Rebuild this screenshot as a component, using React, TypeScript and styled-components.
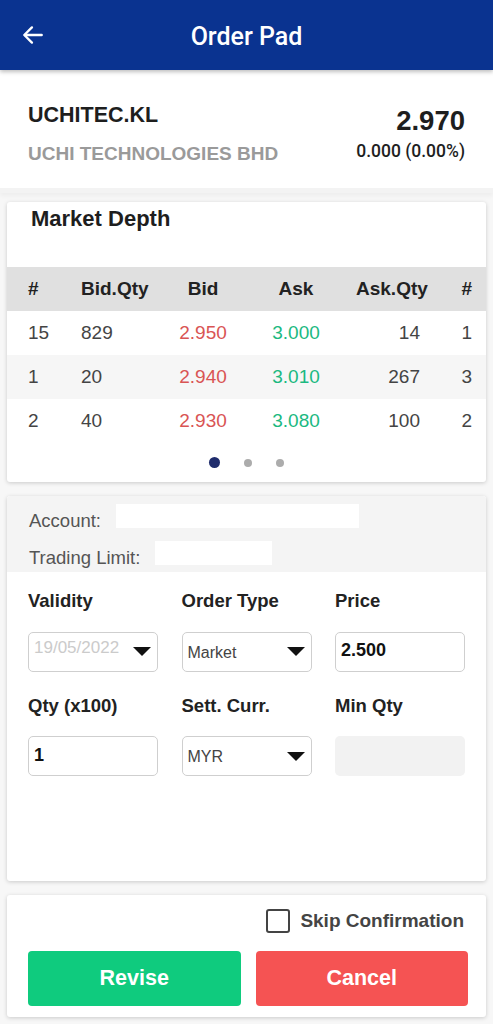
import React from "react";
import styled, { createGlobalStyle } from "styled-components";

const GlobalStyle = createGlobalStyle`
  html, body { margin: 0; padding: 0; }
  body {
    background: #f7f7f7;
    font-family: "Liberation Sans", Arial, sans-serif;
    color: #222;
  }
  * { box-sizing: border-box; }
`;

const Page = styled.div`
  width: 493px;
  min-height: 1024px;
  display: flex;
  flex-direction: column;
`;

const Header = styled.header`
  height: 70px;
  background: #0a3390;
  display: grid;
  grid-template-columns: 70px 1fr 70px;
  align-items: center;
  box-shadow: 0 2px 4px rgba(0, 0, 0, 0.25);
  position: relative;
  z-index: 2;
`;

const BackButton = styled.button`
  border: 0;
  background: transparent;
  padding: 0 0 0 20px;
  height: 70px;
  display: flex;
  align-items: center;
  color: #fff;
`;

const Title = styled.h1`
  margin: 0;
  text-align: center;
  color: #fff;
  font-family: Roboto, "Liberation Sans", sans-serif;
  font-weight: 500;
  font-size: 25px;
  line-height: 28px;
  padding-top: 4px;
`;

const StockSection = styled.section`
  background: #fff;
  display: flex;
  justify-content: space-between;
  padding: 0 28px;
  box-shadow: 0 3px 4px rgba(0, 0, 0, 0.04);
  border-bottom: 5px solid #f3f3f3;
  height: 123px;
`;

const StockLeft = styled.div`
  display: flex;
  flex-direction: column;
  padding-top: 33px;
  gap: 15px;
`;

const StockRight = styled.div`
  display: flex;
  flex-direction: column;
  align-items: flex-end;
  padding-top: 35px;
  gap: 3px;
`;

const Ticker = styled.div`
  font-weight: 700;
  font-size: 21.5px;
  line-height: 24px;
  color: #1e1e1e;
`;

const CompanyName = styled.div`
  font-weight: 700;
  font-size: 19px;
  line-height: 24px;
  color: #9a9a9a;
`;

const LastPrice = styled.div`
  font-weight: 700;
  font-size: 27.5px;
  line-height: 32px;
  color: #1e1e1e;
`;

const Change = styled.div`
  font-family: Roboto, "Liberation Sans", sans-serif;
  font-weight: 500;
  font-size: 17.5px;
  line-height: 22px;
  color: #1e1e1e;
`;

const Content = styled.main`
  display: flex;
  flex-direction: column;
  gap: 14px;
  padding: 9px 7px 7px;
`;

const Card = styled.div<{ $minHeight?: number }>`
  background: #fff;
  border-radius: 3px;
  box-shadow: 0 1px 4px rgba(0, 0, 0, 0.18);
  overflow: hidden;
  min-height: ${(p) => (p.$minHeight ? `${p.$minHeight}px` : "auto")};
`;

const CardTitle = styled.h2`
  margin: 0;
  height: 65px;
  padding: 4px 0 0 24px;
  font-size: 22px;
  line-height: 26px;
  font-weight: 700;
  color: #1e1e1e;
`;

const DepthGrid = styled.div<{ $bg?: string }>`
  display: grid;
  grid-template-columns: 53px 89px 66px 120px 64px 52px;
  padding: 0 14px 0 21px;
  height: 44px;
  align-items: center;
  background: ${(p) => p.$bg || "#fff"};
`;

const Cell = styled.div<{ $align?: string; $color?: string; $bold?: boolean }>`
  font-size: 19px;
  line-height: 22px;
  text-align: ${(p) => p.$align || "left"};
  color: ${(p) => p.$color || (p.$bold ? "#222" : "#444")};
  font-weight: ${(p) => (p.$bold ? 700 : 400)};
  white-space: nowrap;
`;

const Dots = styled.div`
  height: 39px;
  display: flex;
  align-items: center;
  justify-content: center;
  gap: 24px;
`;

const Dot = styled.span<{ $active?: boolean }>`
  width: ${(p) => (p.$active ? 11 : 8)}px;
  height: ${(p) => (p.$active ? 11 : 8)}px;
  border-radius: 50%;
  background: ${(p) => (p.$active ? "#1f2c6c" : "#acacac")};
`;

const AccountSection = styled.div`
  background: #f4f4f4;
  padding: 8px 21px 7px 22px;
  display: flex;
  flex-direction: column;
  gap: 13px;
`;

const AccountRow = styled.div`
  display: flex;
  align-items: flex-end;
  gap: 15px;
  height: 24px;
`;

const AccountLabel = styled.span`
  font-size: 18.5px;
  line-height: 20px;
  color: #555;
  transform: translateY(3px);
`;

const MaskBox = styled.div<{ $w: number }>`
  width: ${(p) => p.$w}px;
  height: 24px;
  background: #fff;
`;

const FieldGrid = styled.div`
  display: grid;
  grid-template-columns: repeat(3, 130px);
  column-gap: 23.5px;
  row-gap: 23px;
  padding: 18px 21px 0 21px;
`;

const Field = styled.div`
  display: flex;
  flex-direction: column;
  gap: 19.5px;
`;

const FieldLabel = styled.label`
  font-size: 18.5px;
  line-height: 22px;
  font-weight: 700;
  color: #222;
  white-space: nowrap;
`;

const InputBox = styled.div<{ $disabled?: boolean }>`
  height: 40px;
  border-radius: 5px;
  border: ${(p) => (p.$disabled ? "0" : "1px solid #cfcfcf")};
  background: ${(p) => (p.$disabled ? "#f2f2f2" : "#fff")};
  display: flex;
  align-items: center;
  justify-content: space-between;
  padding: 0 6px 0 5px;
`;

const InputText = styled.span<{ $tone?: "muted" | "strong" | "normal" }>`
  font-size: ${(p) => (p.$tone === "strong" ? 18 : p.$tone === "muted" ? 17 : 16)}px;
  font-weight: ${(p) => (p.$tone === "strong" ? 700 : 400)};
  color: ${(p) => (p.$tone === "muted" ? "#cbcbcb" : p.$tone === "strong" ? "#111" : "#444")};
  transform: translateY(${(p) => (p.$tone === "muted" ? -4 : p.$tone === "strong" ? -1 : 1)}px);
`;

const Caret = styled.span`
  width: 0;
  height: 0;
  border-left: 9.5px solid transparent;
  border-right: 9.5px solid transparent;
  border-top: 9px solid #111;
`;

const ActionCard = styled(Card)`
  padding: 14px 18px 11px 21px;
  display: flex;
  flex-direction: column;
  gap: 18px;
`;

const SkipRow = styled.label`
  display: flex;
  justify-content: flex-end;
  align-items: center;
  gap: 10px;
  padding-right: 4px;
  height: 24px;
`;

const CheckBox = styled.span`
  width: 24px;
  height: 24px;
  border: 2.5px solid #444;
  border-radius: 3px;
  background: #fff;
`;

const SkipText = styled.span`
  font-size: 19px;
  font-weight: 700;
  color: #444;
`;

const Buttons = styled.div`
  display: grid;
  grid-template-columns: 1fr 1fr;
  gap: 15px;
`;

const ActionButton = styled.button<{ $variant: "green" | "red" }>`
  height: 55px;
  border: 0;
  border-radius: 4px;
  background: ${(p) => (p.$variant === "green" ? "#0fcb7e" : "#f55353")};
  color: #fff;
  font-family: "Liberation Sans", Arial, sans-serif;
  font-weight: 700;
  font-size: 21.5px;
`;

const depthRows = [
  ["15", "829", "2.950", "3.000", "14", "1"],
  ["1", "20", "2.940", "3.010", "267", "3"],
  ["2", "40", "2.930", "3.080", "100", "2"],
];

const RED = "#d95454";
const GREEN = "#1bb981";

export default function App() {
  return (
    <Page>
      <GlobalStyle />
      <Header>
        <BackButton aria-label="Back">
          <svg width="26" height="26" viewBox="0 0 24 24" fill="none" stroke="#fff" strokeWidth="2.2" strokeLinecap="round" strokeLinejoin="round">
            <path d="M20 12H4.5" />
            <path d="M11 5l-7 7 7 7" />
          </svg>
        </BackButton>
        <Title>Order Pad</Title>
        <span />
      </Header>

      <StockSection>
        <StockLeft>
          <Ticker>UCHITEC.KL</Ticker>
          <CompanyName>UCHI TECHNOLOGIES BHD</CompanyName>
        </StockLeft>
        <StockRight>
          <LastPrice>2.970</LastPrice>
          <Change>0.000 (0.00%)</Change>
        </StockRight>
      </StockSection>

      <Content>
        <Card>
          <CardTitle>Market Depth</CardTitle>
          <DepthGrid $bg="#e0e0e0">
            <Cell $bold>#</Cell>
            <Cell $bold>Bid.Qty</Cell>
            <Cell $bold $align="center">Bid</Cell>
            <Cell $bold $align="center">Ask</Cell>
            <Cell $bold $align="right">Ask.Qty</Cell>
            <Cell $bold $align="right">#</Cell>
          </DepthGrid>
          {depthRows.map((r, i) => (
            <DepthGrid key={i} $bg={i === 1 ? "#f6f6f6" : "#fff"}>
              <Cell>{r[0]}</Cell>
              <Cell>{r[1]}</Cell>
              <Cell $align="center" $color={RED}>{r[2]}</Cell>
              <Cell $align="center" $color={GREEN}>{r[3]}</Cell>
              <Cell $align="right">{r[4]}</Cell>
              <Cell $align="right">{r[5]}</Cell>
            </DepthGrid>
          ))}
          <Dots>
            <Dot $active />
            <Dot />
            <Dot />
          </Dots>
        </Card>

        <Card $minHeight={385}>
          <AccountSection>
            <AccountRow>
              <AccountLabel>Account:</AccountLabel>
              <MaskBox $w={243} />
            </AccountRow>
            <AccountRow>
              <AccountLabel>Trading Limit:</AccountLabel>
              <MaskBox $w={117} />
            </AccountRow>
          </AccountSection>
          <FieldGrid>
            <Field>
              <FieldLabel>Validity</FieldLabel>
              <InputBox>
                <InputText $tone="muted">19/05/2022</InputText>
                <Caret />
              </InputBox>
            </Field>
            <Field>
              <FieldLabel>Order Type</FieldLabel>
              <InputBox>
                <InputText>Market</InputText>
                <Caret />
              </InputBox>
            </Field>
            <Field>
              <FieldLabel>Price</FieldLabel>
              <InputBox>
                <InputText $tone="strong">2.500</InputText>
              </InputBox>
            </Field>
            <Field>
              <FieldLabel>Qty (x100)</FieldLabel>
              <InputBox>
                <InputText $tone="strong">1</InputText>
              </InputBox>
            </Field>
            <Field>
              <FieldLabel>Sett. Curr.</FieldLabel>
              <InputBox>
                <InputText>MYR</InputText>
                <Caret />
              </InputBox>
            </Field>
            <Field>
              <FieldLabel>Min Qty</FieldLabel>
              <InputBox $disabled />
            </Field>
          </FieldGrid>
        </Card>

        <ActionCard>
          <SkipRow>
            <CheckBox />
            <SkipText>Skip Confirmation</SkipText>
          </SkipRow>
          <Buttons>
            <ActionButton $variant="green">Revise</ActionButton>
            <ActionButton $variant="red">Cancel</ActionButton>
          </Buttons>
        </ActionCard>
      </Content>
    </Page>
  );
}
